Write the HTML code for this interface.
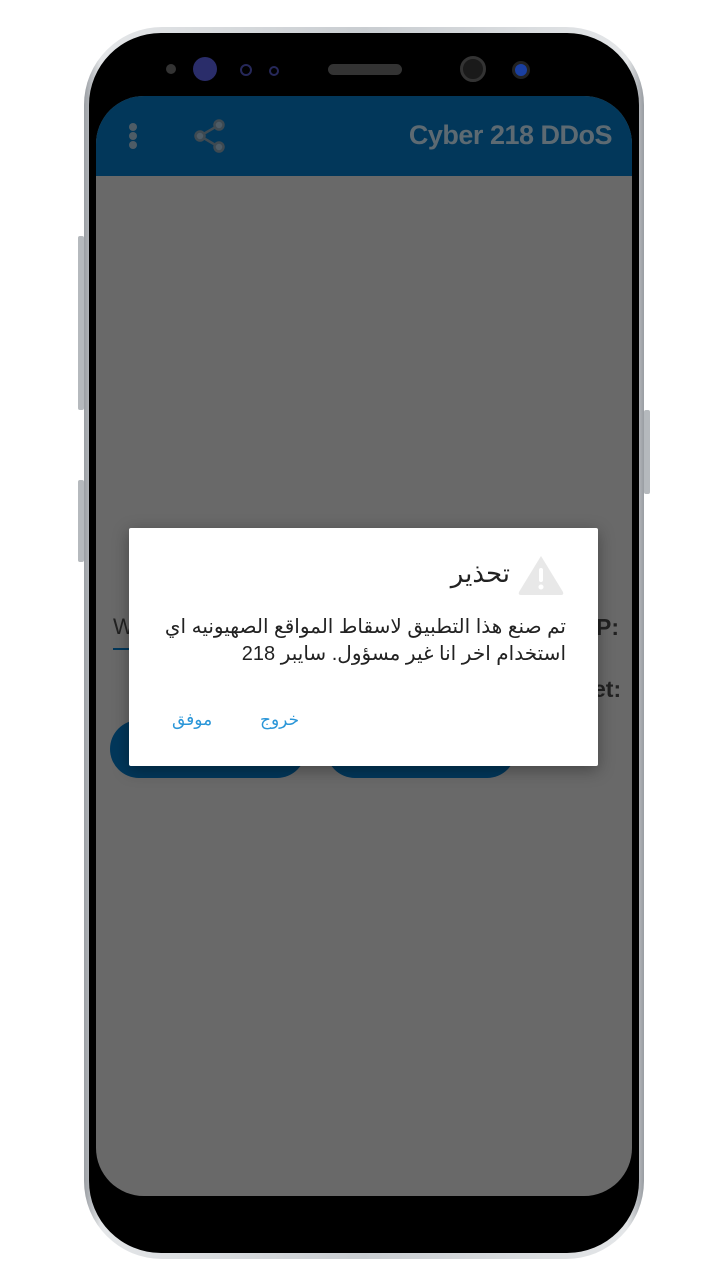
<!DOCTYPE html>
<html><head><meta charset="utf-8"><style>
*{margin:0;padding:0;box-sizing:border-box}
body{width:720px;height:1280px;background:#fff;position:relative;overflow:hidden;font-family:"Liberation Sans","Noto Sans CJK SC",sans-serif}
.abs{position:absolute}
.body{left:84px;top:27px;width:560px;height:1232px;border-radius:78px;background:linear-gradient(90deg,#9a9ea3,#e4e6e8 3%,#c9cdd1 50%,#e4e6e8 97%,#9a9ea3);}
.black{left:89px;top:33px;width:550px;height:1220px;border-radius:72px;background:#000}
.screen{left:96px;top:96px;width:536px;height:1100px;border-radius:48px;background:#696969;overflow:hidden}
.bar{left:0;top:0;width:536px;height:80px;background:#02375a}
.btn{background:#b5b9bd;border-radius:2px}
</style></head><body>
<div class="abs btn" style="left:78px;top:236px;width:6px;height:174px"></div>
<div class="abs btn" style="left:78px;top:480px;width:6px;height:82px"></div>
<div class="abs btn" style="left:644px;top:410px;width:6px;height:84px"></div>
<div class="abs body"></div>
<div class="abs black"></div>
<div class="abs" style="left:166px;top:64px;width:10px;height:10px;border-radius:50%;background:#333"></div>
<div class="abs" style="left:193px;top:57px;width:24px;height:24px;border-radius:50%;background:#2a2d6a"></div>
<div class="abs" style="left:240px;top:64px;width:12px;height:12px;border-radius:50%;border:2px solid #26285a"></div>
<div class="abs" style="left:269px;top:66px;width:10px;height:10px;border-radius:50%;border:2px solid #26285a"></div>
<div class="abs" style="left:328px;top:64px;width:74px;height:11px;border-radius:6px;background:#333"></div>
<div class="abs" style="left:460px;top:56px;width:26px;height:26px;border-radius:50%;background:#1a1a1a;border:3px solid #333"></div>
<div class="abs" style="left:512px;top:61px;width:18px;height:18px;border-radius:50%;background:#1a3fa0;border:3px solid #222"></div>
<div class="abs screen">
 <div class="abs bar"></div>
 <div class="abs" style="left:33px;top:27px;width:8px;height:8px;border-radius:50%;background:#4e5c66;box-shadow:0 9px 0 #4e5c66,0 18px 0 #4e5c66"></div>
 <svg class="abs" style="left:96px;top:22px" width="36" height="36" viewBox="0 0 36 36"><g fill="#4e5c66" stroke="#3e4a52" stroke-width="2.5"><line x1="27" y1="7" x2="8" y2="18"/><line x1="8" y1="18" x2="27" y2="29"/><circle cx="27" cy="7" r="4.5"/><circle cx="8" cy="18" r="4.5"/><circle cx="27" cy="29" r="4.5"/></g></svg>
 <div class="abs" style="right:20px;top:24px;font-size:27px;color:#5d6a72;font-weight:bold;letter-spacing:-0.5px">Cyber 218 DDoS</div>
 <div class="abs" style="left:14px;top:624px;width:196px;height:58px;border-radius:29px;background:#02375a"></div>
 <div class="abs" style="left:230px;top:624px;width:190px;height:58px;border-radius:29px;background:#02375a"></div>
 <div class="abs" style="left:17px;top:518px;font-size:22px;color:#222">W</div>
 <div class="abs" style="left:17px;top:552px;width:20px;height:2px;background:#02375a"></div>
 <div class="abs" style="left:500px;top:518px;font-size:23px;color:#222;font-weight:bold">P:</div>
 <div class="abs" style="left:497px;top:580px;font-size:23px;color:#222;font-weight:bold">et:</div>
</div>
<div class="abs" style="left:129px;top:528px;width:469px;height:238px;background:#fff;border-radius:2px;box-shadow:0 4px 16px rgba(0,0,0,.35)"></div>
<svg class="abs" style="left:517px;top:554px" width="48" height="42" viewBox="0 0 48 42"><path d="M24 2 L46 38 Q47 41 44 41 L4 41 Q1 41 2 38 Z" fill="#e8e8e8"/><rect x="22" y="14" width="4" height="14" rx="2" fill="#fff"/><circle cx="24" cy="33" r="2.5" fill="#fff"/></svg>
<div class="abs" dir="rtl" style="left:420px;top:558px;width:90px;font-size:26px;color:#222;font-family:'Liberation Sans','DejaVu Sans',sans-serif">تحذير</div>
<div class="abs" dir="rtl" style="left:150px;top:614px;width:416px;font-size:20px;line-height:27px;color:#222;font-family:'Liberation Sans','DejaVu Sans',sans-serif"> تم صنع هذا التطبيق لاسقاط المواقع الصهيونيه اي استخدام اخر انا غير مسؤول. سايبر 218</div>
<div class="abs" style="left:172px;top:710px;font-size:17px;color:#2a96d8;font-family:'DejaVu Sans',sans-serif">موفق</div>
<div class="abs" style="left:260px;top:710px;font-size:17px;color:#2a96d8;font-family:'DejaVu Sans',sans-serif">خروج</div>
</body></html>
